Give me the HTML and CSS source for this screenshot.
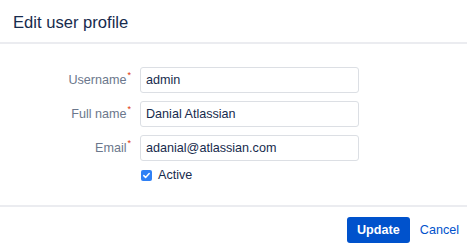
FILE: index.html
```html
<!DOCTYPE html>
<html lang="en">
<head>
<meta charset="utf-8">
<title>Edit user profile</title>
<link rel="stylesheet" href="styles.css">
</head>
<body>
<div class="dialog">
  <header class="dialog-header">
    <h1 class="dialog-title">Edit user profile</h1>
  </header>
  <form class="dialog-body">
    <div class="form-grid">
      <label class="field-label" for="username">Username<span class="req">*</span></label>
      <input class="text-field" id="username" type="text" value="admin">
      <label class="field-label" for="fullname">Full name<span class="req">*</span></label>
      <input class="text-field" id="fullname" type="text" value="Danial Atlassian">
      <label class="field-label" for="email">Email<span class="req">*</span></label>
      <input class="text-field" id="email" type="text" value="adanial@atlassian.com">
      <span class="spacer"></span>
      <label class="check-row">
        <span class="checkbox">
          <svg viewBox="0 0 11 11" width="11" height="11"><path d="M2.8 5.6 L4.6 7.4 L8.2 3.6" fill="none" stroke="#fff" stroke-width="1.5" stroke-linecap="round" stroke-linejoin="round"/></svg>
        </span>
        <span class="check-text">Active</span>
      </label>
    </div>
  </form>
  <footer class="dialog-footer">
    <button class="btn-primary" type="button">Update</button>
    <a class="btn-link" href="#">Cancel</a>
  </footer>
</div>
</body>
</html>
```
FILE: styles.css
```css
html, body {
  margin: 0;
  padding: 0;
  background: #fff;
}
body {
  font-family: "Liberation Sans", Arial, sans-serif;
  color: #172b4d;
}
.dialog {
  width: 467px;
  height: 249px;
  display: flex;
  flex-direction: column;
}
.dialog-header {
  padding: 13px 13px 9px;
  border-bottom: 2px solid #ebecf0;
}
.dialog-title {
  margin: 0;
  font-size: 16.6px;
  line-height: 20px;
  font-weight: normal;
  color: #172b4d;
}
.dialog-body {
  margin: 0;
  padding: 23px 0 0;
  flex: 1;
}
.form-grid {
  display: grid;
  grid-template-columns: 134px 219px;
  grid-auto-rows: auto;
  column-gap: 6px;
  row-gap: 8px;
  align-items: center;
}
.field-label {
  text-align: right;
  font-size: 12.6px;
  color: #6b778c;
  padding-right: 3px;
  line-height: 16px;
}
.req {
  color: #de350b;
  font-size: 9px;
  vertical-align: top;
  line-height: 9px;
  margin-left: 1px;
  position: relative;
  top: -1px;
}
.text-field {
  box-sizing: border-box;
  height: 26px;
  width: 219px;
  margin: 0;
  padding: 0 5px;
  border: 1.5px solid #dcdfe4;
  border-radius: 3px;
  background: #fff;
  font-family: "Liberation Sans", Arial, sans-serif;
  font-size: 12.6px;
  color: #172b4d;
  outline: none;
}
.check-row {
  display: flex;
  align-items: center;
  gap: 6px;
  margin-top: -1px;
  height: 14px;
}
.checkbox {
  width: 11px;
  height: 11px;
  margin-left: 1px;
  border-radius: 2px;
  background: #2f80f5;
  display: flex;
}
.checkbox svg {
  display: block;
}
.check-text {
  font-size: 12.6px;
  color: #172b4d;
}
.dialog-footer {
  border-top: 2px solid #ebecf0;
  padding: 10px 8px 6px 0;
  display: flex;
  justify-content: flex-end;
  align-items: center;
  gap: 10px;
}
.btn-primary {
  height: 26px;
  width: 63px;
  margin: 0;
  padding: 0;
  border: none;
  border-radius: 3px;
  background: #0052cc;
  color: #fff;
  font-family: "Liberation Sans", Arial, sans-serif;
  font-size: 12.6px;
  font-weight: bold;
}
.btn-link {
  font-size: 12.6px;
  color: #0052cc;
  text-decoration: none;
}
```
